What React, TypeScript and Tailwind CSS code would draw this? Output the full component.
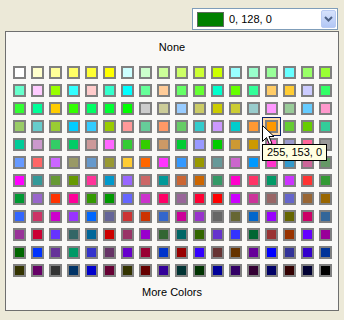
import React from "react";

const ROWS: string[] = [
  "FFFFFF FFFFCC FFFF99 FFFF66 FFFF33 FFFF00 CCFFFF CCFFCC CCFF99 CCFF66 CCFF33 CCFF00 99FFFF 99FFCC 99FF99 66FFFF 99FF66 99FF33",
  "66FFCC FFCCFF 99FF00 33FFFF FFCCCC 33FFCC 00FFFF 66FF99 FFCC99 66FF66 66FF33 00FFCC 66FF00 33FF99 FFCC66 FFCC33 CCCCFF 33FF66",
  "33FF33 00FF99 FFCC00 33FF00 00FF66 00FF33 00FF00 CCCCCC CCCC99 99CCFF CCCC66 CCCC00 CCCC33 99CCCC FF99FF 99CC99 66CCFF FF99CC",
  "99CC66 66CCCC 99CC33 00CCFF 33CCFF 99CC00 FF9999 66CC99 FF9966 66CC66 33CCCC CC99FF 00CCCC FF9933 FF9900 66CC33 66CC00 33CC99",
  "00CC99 CC99CC 33CC66 00CC66 CC9999 FF66FF 33CC33 33CC00 CC9966 00CC33 9999FF 00CC00 CC9933 CC9900 FF66CC 9999CC FF6699 999999",
  "6699FF FF6666 CC66FF 999966 6699CC 999933 FFCC33 FF6600 FF33FF 3399FF 999900 669999 CC66CC 0099FF FF33CC 3399CC CC6699 669966",
  "FF00FF 339999 669933 669900 FF3399 0099CC 9966FF CC6666 009999 CC6633 CC6600 339966 FF00CC FF3366 009966 CC33FF FF3333 339933",
  "009933 9966CC FF3300 FF0099 339900 009900 6666FF CC33CC FF0066 996699 FF0033 FF0000 CC00FF CC3399 996666 6666CC 996633 996600",
  "3366FF CC3366 CC00CC 9933FF 0066FF 666699 CC3333 CC3300 3366CC CC0099 9933CC 666666 666633 0066CC 9900FF 666600 CC0066 336699",
  "993399 CC0033 6633FF 336666 006699 CC0000 993366 9900CC 336633 006666 336600 6633CC 3333FF 006633 993333 993300 6600FF 990099",
  "006600 0033FF 663399 009966 3333CC 663366 6600CC 990033 0033CC 990000 3300FF 663333 663300 660099 0000FF 333399 3300CC 003399",
  "333300 660066 333333 003366 0000CC 660033 333300 660000 330099 003333 003300 000099 330066 330033 000066 330000 000033 000000",
];

const COLORS = ROWS.flatMap((r) => r.split(" "));
const SELECTED = 3 * 18 + 14;

const font = { fontFamily: '"Liberation Sans", Arial, sans-serif' };

export default function App() {
  return (
    <div
      className="relative w-[344px] h-[320px] bg-[#ECE9D8] overflow-hidden text-[11px] leading-[13px] text-black"
      style={font}
    >
      {/* Combobox */}
      <div className="flex justify-end pt-[8px] pr-[6px]">
        <div className="w-[146px] h-[22px] border border-[#7F9DB9] bg-white flex items-center">
          <div className="ml-[4px] w-[27px] h-[15px] border border-[#5F6B5F] bg-[#008000]" />
          <span className="ml-[5px] flex-1">0, 128, 0</span>
          <div className="mr-[1px] w-[15px] h-[18px] rounded-[2px] border border-[#B9CBF3] bg-gradient-to-b from-[#D6E2FC] to-[#B2C7F5] flex items-center justify-center">
            <svg width="9" height="6" viewBox="0 0 9 6">
              <path d="M1 1 L4.5 4.5 L8 1" fill="none" stroke="#4D6185" strokeWidth="2" />
            </svg>
          </div>
        </div>
      </div>

      {/* Panel */}
      <div className="ml-[5px] mt-[1px] w-[334px] h-[280px] border border-[#6F6F6F] bg-[#F9F8F6] flex flex-col">
        <div className="h-[34px] pt-[9px] text-center">None</div>
        <div className="pl-[7px] grid grid-cols-[repeat(18,13px)] gap-[5px]">
          {COLORS.map((c, i) =>
            i === SELECTED ? (
              <div key={i} className="relative w-[13px] h-[13px]">
                <div className="absolute left-[-3px] top-[-3px] w-[19px] h-[19px] border border-[#0A246A] bg-[#FFD9A4]" />
                <div
                  className="relative w-[13px] h-[13px] border-2 border-[#808080]"
                  style={{ backgroundColor: `#${c}` }}
                />
              </div>
            ) : (
              <div
                key={i}
                className="w-[13px] h-[13px] border-2 border-[#808080]"
                style={{ backgroundColor: `#${c}` }}
              />
            )
          )}
        </div>
        <div className="mt-[9px] text-center">More Colors</div>
      </div>

      {/* Cursor */}
      <svg
        className="absolute left-[262px] top-[125px]"
        width="13"
        height="21"
        viewBox="0 0 13 21"
      >
        <path
          d="M0.5 0.5 L0.5 16.5 L4.5 12.5 L7.5 19.5 L10 18.5 L7 11.5 L12 11.5 Z"
          fill="white"
          stroke="black"
          strokeWidth="1"
          strokeLinejoin="miter"
        />
      </svg>

      {/* Tooltip */}
      <div className="absolute left-[262px] top-[144px] border border-black bg-[#FFFFE1] px-[4px] py-[1px] whitespace-nowrap">
        255, 153, 0
      </div>
    </div>
  );
}
